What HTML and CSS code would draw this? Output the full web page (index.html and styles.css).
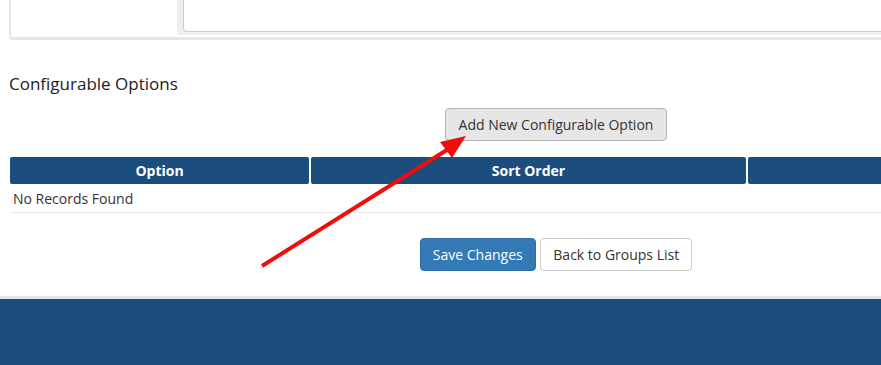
FILE: index.html
```html
<!DOCTYPE html>
<html lang="en">
<head>
  <meta charset="UTF-8" />
  <meta name="viewport" content="width=device-width, initial-scale=1.0"/>
  <title>Configurable Options</title>
  <link rel="stylesheet" href="styles.css">
</head>
<body>

  <div class="content">
    <div class="form-panel">
      <div class="form-row">
        <div class="field-label"></div>
        <div class="field-area">
          <div class="field-input"></div>
        </div>
      </div>
    </div>

    <h2>Configurable Options</h2>

    <div class="btn-row">
      <button class="btn btn-default active" type="button">Add New Configurable Option</button>
    </div>

    <div class="datatable">
      <div class="thead">
        <div class="th col-option">Option</div>
        <div class="th col-sort">Sort Order</div>
        <div class="th col-rest"></div>
      </div>
      <div class="tr">No Records Found</div>
    </div>

    <div class="btn-row btn-row-save">
      <button class="btn btn-primary" type="submit">Save Changes</button>
      <button class="btn btn-white" type="button">Back to Groups List</button>
    </div>
  </div>

  <footer></footer>

  <!-- annotation arrow -->
  <svg class="arrow" width="881" height="365" viewBox="0 0 881 365">
    <line x1="262" y1="266" x2="450" y2="148" stroke="#f20c0c" stroke-width="4"/>
    <polygon points="466,136 440,142 452,158" fill="#f20c0c"/>
  </svg>
</body>
</html>
```

FILE: styles.css
```css
body {
  font-family: 'Open Sans', 'Liberation Sans', sans-serif;
  font-size: 14px;
  color: #333;
  background: white;
  margin: 0;
  padding: 0;
  width: 881px;
  height: 365px;
  overflow: hidden;
  position: relative;
}
.content {
  width: 1094px;
  padding-left: 9px;
}
.form-panel {
  height: 40px;
  box-sizing: border-box;
  border-left: 2px solid #e6e6e6;
  border-bottom: 3px solid #e6e6e6;
  border-bottom-left-radius: 4px;
  padding-bottom: 2px;
}
.form-row {
  display: flex;
  height: 35px;
}
.field-label {
  width: 166px;
  background: white;
}
.field-area {
  flex: 1;
  background: #efefef;
  padding: 0 0 3px 6px;
}
.field-input {
  height: 31px;
  background: white;
  border: 1px solid #ccc;
  border-top: none;
  border-bottom-left-radius: 4px;
}
h2 {
  font-size: 17px;
  font-weight: 400;
  line-height: 22px;
  margin: 33px 0 0;
  color: #222;
}
.btn-row {
  text-align: center;
  margin-top: 13px;
}
.btn {
  font-family: inherit;
  font-size: 14px;
  line-height: 19px;
  padding: 6px 12px;
  border-radius: 4px;
  border: 1px solid #ccc;
  cursor: pointer;
  margin: 0;
}
.btn-default {
  background: #e6e6e6;
  border-color: #b3b3b3;
  color: #333;
  padding: 6px 13px;
}
.btn-primary {
  background: #337ab7;
  border-color: #2e6da4;
  color: white;
}
.btn-white {
  background: white;
  color: #333;
  margin-left: 1px;
}
.datatable {
  margin: 16px 0 0 1px;
}
.thead {
  display: flex;
  gap: 2px;
}
.th {
  background: #1b4d7e;
  color: white;
  font-weight: 700;
  text-align: center;
  height: 27px;
  line-height: 27px;
  border-radius: 2px;
}
.col-option {
  width: 299px;
}
.col-sort {
  width: 435px;
}
.col-rest {
  flex: 1;
}
.tr {
  height: 28px;
  line-height: 30px;
  padding-left: 3px;
  border-bottom: 1px solid #e8e8e8;
}
.btn-row-save {
  margin-top: 25px;
}
footer {
  position: absolute;
  left: 0;
  right: 0;
  top: 296px;
  bottom: 0;
  background: #1b4d7e;
  border-top: 3px solid #e2e6ea;
}
.arrow {
  position: absolute;
  left: 0;
  top: 0;
}
```
